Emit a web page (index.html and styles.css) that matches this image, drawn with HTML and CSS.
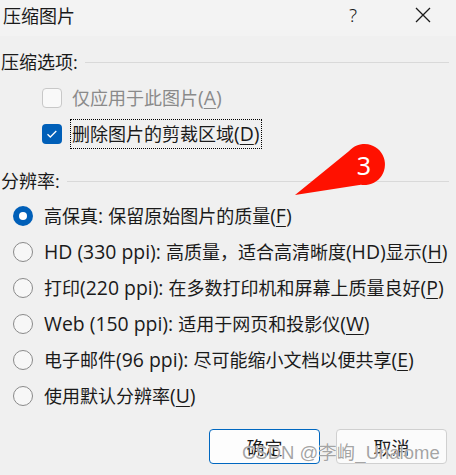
FILE: index.html
```html
<!DOCTYPE html>
<html lang="zh-CN">
<head>
<meta charset="utf-8">
<title>压缩图片</title>
<link rel="stylesheet" href="styles.css">
</head>
<body>
<div class="dialog">
  <div class="titlebar">
    <span class="title">压缩图片</span>
    <span class="help">?</span>
    <span class="close">
      <svg width="16" height="16" viewBox="0 0 16 16"><path d="M1 1 L15 15 M15 1 L1 15" stroke="#1a1a1a" stroke-width="1.3" fill="none"/></svg>
    </span>
  </div>

  <div class="group-head first"><span class="label">压缩选项:</span><span class="rule"></span></div>
  <div class="check-row">
    <span class="checkbox disabled"></span>
    <span class="check-label disabled-text">仅应用于此图片<span class="lat">(<u>A</u>)</span></span>
  </div>
  <div class="check-row">
    <span class="checkbox checked">
      <svg width="20" height="20" viewBox="0 0 20 20"><path d="M5.5 10.2 L8.3 13 L14.3 7" stroke="#fff" stroke-width="1.3" fill="none"/></svg>
    </span>
    <span class="check-label focused">删除图片的剪裁区域<span class="lat">(<u>D</u>)</span></span>
  </div>

  <div class="group-head second"><span class="label">分辨率:</span><span class="rule"></span></div>
  <div class="radio-list">
    <div class="radio-row"><span class="radio selected"></span><span class="radio-label">高保真<span class="lat">: </span>保留原始图片的质量<span class="lat">(<u>F</u>)</span></span></div>
    <div class="radio-row"><span class="radio"></span><span class="radio-label"><span class="lat">HD (330 ppi): </span>高质量，适合高清晰度<span class="lat">(HD)</span>显示<span class="lat">(<u>H</u>)</span></span></div>
    <div class="radio-row"><span class="radio"></span><span class="radio-label">打印<span class="lat">(220 ppi): </span>在多数打印机和屏幕上质量良好<span class="lat">(<u>P</u>)</span></span></div>
    <div class="radio-row"><span class="radio"></span><span class="radio-label"><span class="lat">Web (150 ppi): </span>适用于网页和投影仪<span class="lat">(<u>W</u>)</span></span></div>
    <div class="radio-row"><span class="radio"></span><span class="radio-label">电子邮件<span class="lat">(96 ppi): </span>尽可能缩小文档以便共享<span class="lat">(<u>E</u>)</span></span></div>
    <div class="radio-row"><span class="radio"></span><span class="radio-label">使用默认分辨率<span class="lat">(<u>U</u>)</span></span></div>
  </div>

  <div class="buttons">
    <button class="btn primary">确定</button>
    <button class="btn">取消</button>
  </div>

  <svg class="callout" width="456" height="475" viewBox="0 0 456 475">
    <path d="M295 195 L348.8 151.3 A20.5 20.5 0 1 1 360.9 184.7 Z" fill="#ff1100"/>
    <text x="364" y="174.5" text-anchor="middle" class="callout-num">3</text>
  </svg>

  <div class="watermark">CSDN @李峋_Unalome</div>
</div>
</body>
</html>
```
FILE: styles.css
```css
html, body {
  margin: 0;
  padding: 0;
  background: #f0f0f0;
}

body {
  font-family: "Open Sans", "Noto Sans CJK SC", sans-serif;
  font-size: 18px;
  color: #1a1a1a;
}

.dialog {
  position: relative;
  width: 456px;
  height: 475px;
  overflow: hidden;
  background: #f0f0f0;
}

.titlebar {
  height: 36px;
  display: flex;
  align-items: center;
  padding-left: 3px;
  background: #f3f3f3;
  box-sizing: border-box;
}

.title {
  font-family: "Noto Sans CJK SC", sans-serif;
  line-height: 1;
  margin-top: -6px;
}

.help {
  margin-left: auto;
  font-family: "Noto Sans", sans-serif;
  font-weight: 300;
  font-size: 19px;
  line-height: 1;
  margin-top: -6px;
  margin-right: 58px;
}

.close {
  display: flex;
  margin-right: 25px;
  margin-top: -6px;
}

.lat {
  font-size: 19.4px;
}

.group-head {
  height: 28px;
  display: flex;
  align-items: center;
  padding-left: 1px;
  padding-right: 7px;
}

.group-head.first {
  margin-top: 12px;
  margin-bottom: 4px;
}

.group-head.second {
  margin-top: 15px;
}

.group-head .label {
  line-height: 1;
}

.rule {
  flex: 1;
  height: 1px;
  background: #d9d9d9;
  margin-left: 7px;
}

.check-row {
  height: 36px;
  display: flex;
  align-items: center;
  padding-left: 42px;
}

.checkbox {
  width: 20px;
  height: 20px;
  box-sizing: border-box;
  border-radius: 4px;
  margin-right: 8px;
  display: flex;
  flex-shrink: 0;
}

.checkbox.disabled {
  border: 1px solid #c8c8c8;
  background: #f9f9f9;
}

.checkbox.checked {
  background: #005fb8;
}

.check-label {
  padding: 0 1px;
  border: 1px dotted transparent;
  line-height: 28px;
  white-space: nowrap;
}

.check-label.focused {
  border: 1px dotted #000;
}

.disabled-text {
  color: #8a8a8a;
}

u {
  text-decoration-thickness: 1px;
  text-underline-offset: 3px;
}

.radio-list {
  margin-top: 3px;
  display: flex;
  flex-direction: column;
}

.radio-row {
  height: 36px;
  display: flex;
  align-items: center;
  padding-left: 13px;
}

.radio {
  width: 20px;
  height: 20px;
  box-sizing: border-box;
  border-radius: 50%;
  border: 1px solid #8a8a8a;
  background: #f7f7f7;
  margin-right: 11px;
  flex-shrink: 0;
  display: flex;
  align-items: center;
  justify-content: center;
}

.radio.selected {
  border: none;
  background: #005fb8;
}

.radio.selected::after {
  content: "";
  width: 8px;
  height: 8px;
  border-radius: 50%;
  background: #fff;
}

.radio-label {
  white-space: nowrap;
  line-height: 1;
}

.buttons {
  margin-top: 15px;
  display: flex;
  justify-content: flex-end;
  gap: 16px;
  padding-right: 9px;
}

.btn {
  width: 111px;
  height: 35px;
  box-sizing: border-box;
  border-radius: 4px;
  border: 1px solid #d0d0d0;
  background: #fbfbfb;
  font-family: "Noto Sans CJK SC", sans-serif;
  font-size: 18px;
  color: #1a1a1a;
  padding: 0;
  line-height: 1;
}

.btn.primary {
  border: 1px solid #0067c0;
  background: #fdfdfd;
}

.callout {
  position: absolute;
  left: 0;
  top: 0;
  pointer-events: none;
}

.callout-num {
  font-family: "Noto Sans", sans-serif;
  font-size: 25px;
  fill: #fff;
}

.watermark {
  position: absolute;
  left: 242px;
  top: 444px;
  font-family: "Liberation Sans", "Noto Sans CJK SC", sans-serif;
  font-size: 18.5px;
  line-height: 1;
  color: rgba(105, 105, 105, 0.62);
  text-shadow: 0 0 1px rgba(255, 255, 255, 1), 0 0 1px rgba(255, 255, 255, 1);
  white-space: nowrap;
  pointer-events: none;
}
```
